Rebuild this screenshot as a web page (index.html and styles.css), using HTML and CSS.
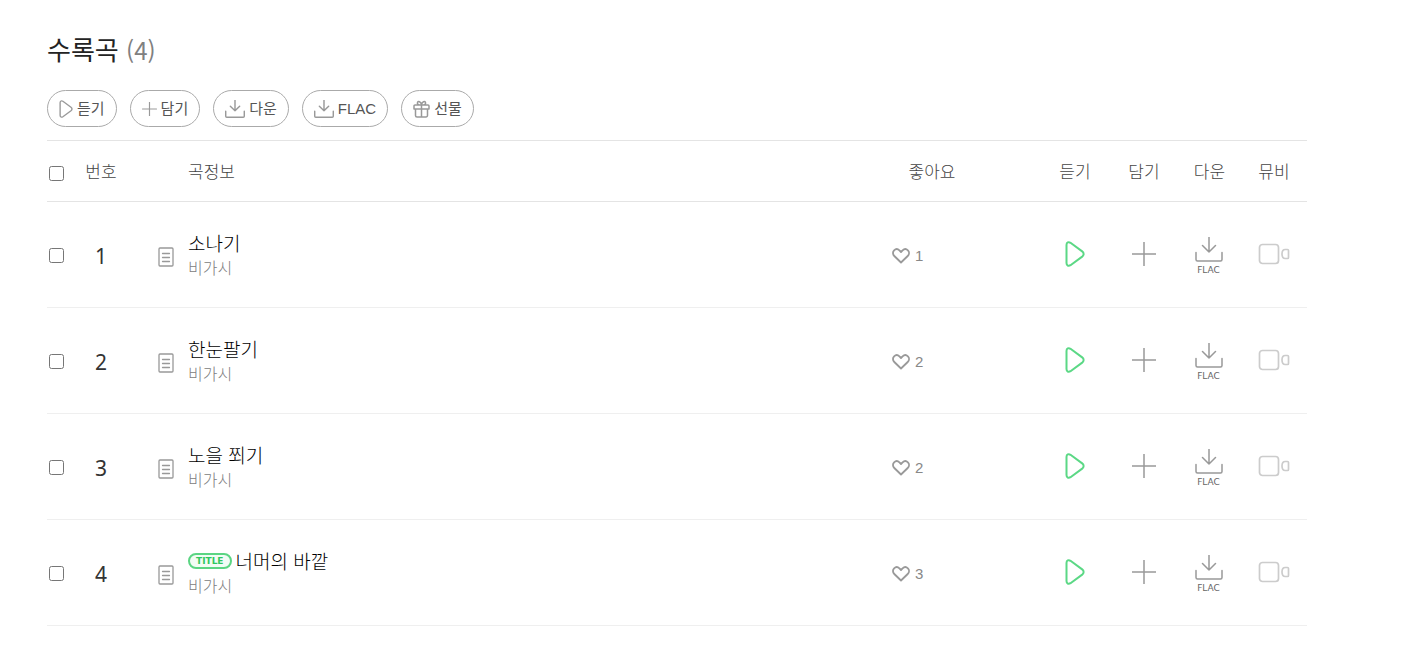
FILE: index.html
```html
<!DOCTYPE html>
<html lang="ko">

<head>
  <meta charset="UTF-8" />
  <title>수록곡</title>
  <meta name="viewport" content="width=device-width, initial-scale=1.0" />
  <link rel="stylesheet" href="styles.css">
</head>

<body>
  <!-- 공용 아이콘 -->
  <svg class="sprite" aria-hidden="true">
    <symbol id="icon-play" viewBox="0 0 20 26">
      <path d="M1.500 4v18c0 2.600 2 3.500 4 2.200l11.700-8.600c1.900-1.500 1.900-3.700 0-5.200L5.500 1.800C3.500.5 1.500 1.400 1.500 4z" />
    </symbol>
    <symbol id="icon-plus" viewBox="0 0 24 24">
      <path d="M12 0v24M0 12h24" />
    </symbol>
    <symbol id="icon-down" viewBox="0 0 28 25">
      <path d="M14 0v15M7.500 8.500l6.500 6.500 6.500-6.500M1 15.500v7c0 1 .5 1.500 1.500 1.500h23c1 0 1.500-.5 1.500-1.500v-7" />
    </symbol>
    <symbol id="icon-gift" viewBox="0 0 16 18">
      <path d="M1.500 5h13a1 1 0 0 1 1 1v3h-15V6a1 1 0 0 1 1-1zM2 9v6.500a1.500 1.500 0 0 0 1.500 1.500h9a1.500 1.500 0 0 0 1.500-1.500V9M8 5v12M8 5C4.500 5 3.500 4 4 2.500 4.700.8 7.300 1.500 8 4.500 8.700 1.500 11.300.8 12 2.500 12.500 4 11.500 5 8 5z" />
    </symbol>
    <symbol id="icon-lyric" viewBox="0 0 16 20">
      <rect x="1" y="1" width="14" height="18" rx="1" />
      <path d="M4.500 6.500h7M4.500 10.500h7M4.500 14.500h7" />
    </symbol>
    <symbol id="icon-heart" viewBox="0 0 18 16">
      <path d="M9 14.500L2.300 8C.5 6.200.6 3.800 2.100 2.300 3.700.8 6 1 7.400 2.400L9 4l1.600-1.600C12 1 14.300.8 15.900 2.300c1.500 1.500 1.600 3.900-.2 5.700z" />
    </symbol>
    <symbol id="icon-video" viewBox="0 0 32 22">
      <rect x="1.500" y="1.500" width="19" height="19" rx="3" />
      <path d="M29.500 6.500h-2.300c-2 0-3.200 1.800-3.200 4.500s1.200 4.500 3.200 4.500h2.300a1 1 0 0 0 1-1v-7a1 1 0 0 0-1-1z" />
    </symbol>
  </svg>

  <main class="album">
    <h2 class="album-title">수록곡 <span class="count">(4)</span></h2>

    <div class="actions">
      <button type="button" class="action-btn"><svg class="icon-s-play"><use href="#icon-play" /></svg>듣기</button>
      <button type="button" class="action-btn"><svg class="icon-s-plus"><use href="#icon-plus" /></svg>담기</button>
      <button type="button" class="action-btn"><svg class="icon-s-down"><use href="#icon-down" /></svg>다운</button>
      <button type="button" class="action-btn"><svg class="icon-s-down"><use href="#icon-down" /></svg><span class="latin">FLAC</span></button>
      <button type="button" class="action-btn"><svg class="icon-s-gift"><use href="#icon-gift" /></svg>선물</button>
    </div>

    <table class="track-table">
      <thead>
        <tr>
          <th class="col-check"><input type="checkbox" aria-label="전체 선택"></th>
          <th class="col-num">번호</th>
          <th class="col-lyric"></th>
          <th class="col-info">곡정보</th>
          <th class="col-like">좋아요</th>
          <th class="col-play">듣기</th>
          <th class="col-add">담기</th>
          <th class="col-down">다운</th>
          <th class="col-video">뮤비</th>
        </tr>
      </thead>
      <tbody>
        <tr>
          <td class="col-check"><input type="checkbox" aria-label="소나기 선택"></td>
          <td class="col-num">1</td>
          <td class="col-lyric"><button type="button" aria-label="가사"><svg class="icon-lyric"><use href="#icon-lyric" /></svg></button></td>
          <td class="col-info">
            <div class="song"><a href="#">소나기</a></div>
            <a class="artist" href="#">비가시</a>
          </td>
          <td class="col-like"><button type="button" class="like" aria-label="좋아요 1"><svg class="icon-heart"><use href="#icon-heart" /></svg>1</button></td>
          <td class="col-play"><button type="button" aria-label="듣기"><svg class="icon-play"><use href="#icon-play" /></svg></button></td>
          <td class="col-add"><button type="button" aria-label="담기"><svg class="icon-plus"><use href="#icon-plus" /></svg></button></td>
          <td class="col-down"><button type="button" class="flac" aria-label="FLAC 다운"><svg class="icon-down"><use href="#icon-down" /></svg>FLAC</button></td>
          <td class="col-video"><button type="button" aria-label="뮤비" disabled><svg class="icon-video"><use href="#icon-video" /></svg></button></td>
        </tr>
        <tr>
          <td class="col-check"><input type="checkbox" aria-label="한눈팔기 선택"></td>
          <td class="col-num">2</td>
          <td class="col-lyric"><button type="button" aria-label="가사"><svg class="icon-lyric"><use href="#icon-lyric" /></svg></button></td>
          <td class="col-info">
            <div class="song"><a href="#">한눈팔기</a></div>
            <a class="artist" href="#">비가시</a>
          </td>
          <td class="col-like"><button type="button" class="like" aria-label="좋아요 2"><svg class="icon-heart"><use href="#icon-heart" /></svg>2</button></td>
          <td class="col-play"><button type="button" aria-label="듣기"><svg class="icon-play"><use href="#icon-play" /></svg></button></td>
          <td class="col-add"><button type="button" aria-label="담기"><svg class="icon-plus"><use href="#icon-plus" /></svg></button></td>
          <td class="col-down"><button type="button" class="flac" aria-label="FLAC 다운"><svg class="icon-down"><use href="#icon-down" /></svg>FLAC</button></td>
          <td class="col-video"><button type="button" aria-label="뮤비" disabled><svg class="icon-video"><use href="#icon-video" /></svg></button></td>
        </tr>
        <tr>
          <td class="col-check"><input type="checkbox" aria-label="노을 쬐기 선택"></td>
          <td class="col-num">3</td>
          <td class="col-lyric"><button type="button" aria-label="가사"><svg class="icon-lyric"><use href="#icon-lyric" /></svg></button></td>
          <td class="col-info">
            <div class="song"><a href="#">노을 쬐기</a></div>
            <a class="artist" href="#">비가시</a>
          </td>
          <td class="col-like"><button type="button" class="like" aria-label="좋아요 2"><svg class="icon-heart"><use href="#icon-heart" /></svg>2</button></td>
          <td class="col-play"><button type="button" aria-label="듣기"><svg class="icon-play"><use href="#icon-play" /></svg></button></td>
          <td class="col-add"><button type="button" aria-label="담기"><svg class="icon-plus"><use href="#icon-plus" /></svg></button></td>
          <td class="col-down"><button type="button" class="flac" aria-label="FLAC 다운"><svg class="icon-down"><use href="#icon-down" /></svg>FLAC</button></td>
          <td class="col-video"><button type="button" aria-label="뮤비" disabled><svg class="icon-video"><use href="#icon-video" /></svg></button></td>
        </tr>
        <tr>
          <td class="col-check"><input type="checkbox" aria-label="너머의 바깥 선택"></td>
          <td class="col-num">4</td>
          <td class="col-lyric"><button type="button" aria-label="가사"><svg class="icon-lyric"><use href="#icon-lyric" /></svg></button></td>
          <td class="col-info">
            <div class="song"><span class="title-badge">TITLE</span><a href="#">너머의 바깥</a></div>
            <a class="artist" href="#">비가시</a>
          </td>
          <td class="col-like"><button type="button" class="like" aria-label="좋아요 3"><svg class="icon-heart"><use href="#icon-heart" /></svg>3</button></td>
          <td class="col-play"><button type="button" aria-label="듣기"><svg class="icon-play"><use href="#icon-play" /></svg></button></td>
          <td class="col-add"><button type="button" aria-label="담기"><svg class="icon-plus"><use href="#icon-plus" /></svg></button></td>
          <td class="col-down"><button type="button" class="flac" aria-label="FLAC 다운"><svg class="icon-down"><use href="#icon-down" /></svg>FLAC</button></td>
          <td class="col-video"><button type="button" aria-label="뮤비" disabled><svg class="icon-video"><use href="#icon-video" /></svg></button></td>
        </tr>
      </tbody>
    </table>
  </main>
</body>

</html>
```
FILE: styles.css
```css
* {
  box-sizing: border-box;
}

body {
  margin: 0;
  background: #fff;
  color: #232323;
  font-family: "Noto Sans CJK KR", sans-serif;
}

button {
  padding: 0;
  border: 0;
  background: none;
  color: inherit;
  font: inherit;
  cursor: pointer;
}

a {
  color: inherit;
  text-decoration: none;
}

svg {
  display: block;
  flex: none;
  fill: none;
  stroke: #999;
  stroke-linecap: round;
  stroke-linejoin: round;
}

.sprite {
  display: none;
}

.album {
  padding: 31px 103px 20px 47px;
}

.album-title {
  margin: 0 0 22px;
  font-size: 26px;
  font-weight: 400;
  line-height: 36px;
}

.count {
  color: #808080;
  font-size: 24px;
}

.actions {
  display: flex;
  flex-wrap: wrap;
  gap: 13px;
  margin-bottom: 13px;
}

.action-btn {
  display: flex;
  align-items: center;
  gap: 4px;
  height: 37px;
  padding: 0 11px 2px;
  border: 1px solid #aaa;
  border-radius: 19px;
  color: #555;
  font-size: 15px;
  line-height: 20px;
}

.action-btn svg {
  margin-top: 2px;
}

.latin {
  padding-top: 2px;
  font-family: "Liberation Sans", sans-serif;
}

.icon-s-play {
  width: 14px;
  height: 18px;
  stroke-width: 2;
}

.icon-s-plus {
  width: 15px;
  height: 14px;
  stroke-width: 2;
}

.icon-s-down {
  width: 20px;
  height: 18px;
  stroke-width: 2;
}

.icon-s-gift {
  width: 17px;
  height: 18px;
  stroke-width: 1.5;
}

/* 곡 목록 */
.track-table {
  width: 100%;
  border-collapse: separate;
  border-spacing: 0;
  border-top: 1px solid #e4e4e4;
  table-layout: fixed;
}

th,
td {
  padding: 0;
  text-align: center;
  vertical-align: middle;
}

th {
  height: 61px;
  border-bottom: 1px solid #e4e4e4;
  color: #444;
  font-size: 17px;
  font-weight: 300;
  line-height: 24px;
}

td {
  height: 106px;
  padding-bottom: 2px;
  border-bottom: 1px solid #efefef;
}

td button {
  display: block;
  margin: 0 auto;
}

input[type="checkbox"] {
  display: block;
  width: 15px;
  height: 15px;
  margin: 4px 0 0 2px;
}

.col-check {
  width: 28px;
}

.col-num {
  width: 52px;
}

td.col-num {
  padding-top: 4px;
  color: #333;
  font-family: "Noto Sans", sans-serif;
  font-size: 21px;
}

.col-lyric {
  width: 61px;
}

td.col-lyric {
  padding: 4px 0 0 16px;
}

.col-info {
  text-align: left;
}

.song {
  display: flex;
  align-items: center;
  gap: 4px;
  color: #000;
  font-size: 19px;
  font-weight: 300;
  line-height: 26px;
}

.artist {
  display: block;
  color: #808080;
  font-size: 16px;
  font-weight: 300;
  line-height: 22px;
}

.title-badge {
  padding: 0 6px;
  border: 2px solid #5bd583;
  border-radius: 8px;
  background: #f2fcf5;
  color: #2fc75f;
  font-family: "DejaVu Sans", sans-serif;
  font-size: 9px;
  font-weight: 700;
  line-height: 12px;
}

.col-like {
  width: 168px;
  padding-right: 48px;
}

td.col-like {
  padding: 2px 0 0 20px;
}

td .like {
  display: flex;
  align-items: center;
  gap: 5px;
  margin: 0;
  color: #888;
  font-family: "Liberation Sans", sans-serif;
  font-size: 15px;
}

.col-play {
  width: 70px;
}

.col-add {
  width: 68px;
}

.col-down {
  width: 63px;
}

td.col-down {
  padding: 4px 2px 0 0;
}

.col-video {
  width: 66px;
}

.flac {
  color: #666;
  font-family: "DejaVu Sans", sans-serif;
  font-size: 9px;
  line-height: 12px;
}

.flac svg {
  margin-bottom: 2px;
}

.icon-lyric {
  width: 16px;
  height: 20px;
  stroke-width: 1.3;
}

.icon-heart {
  width: 18px;
  height: 16px;
  stroke-width: 1.8;
}

.icon-play {
  width: 20px;
  height: 26px;
  stroke: #5bd885;
  stroke-width: 2;
}

.icon-plus {
  width: 24px;
  height: 24px;
  stroke-width: 1.5;
}

.icon-down {
  width: 28px;
  height: 25px;
  stroke-width: 1.5;
}

.icon-video {
  width: 32px;
  height: 22px;
  stroke: #ccc;
  stroke-width: 1.7;
}
```
